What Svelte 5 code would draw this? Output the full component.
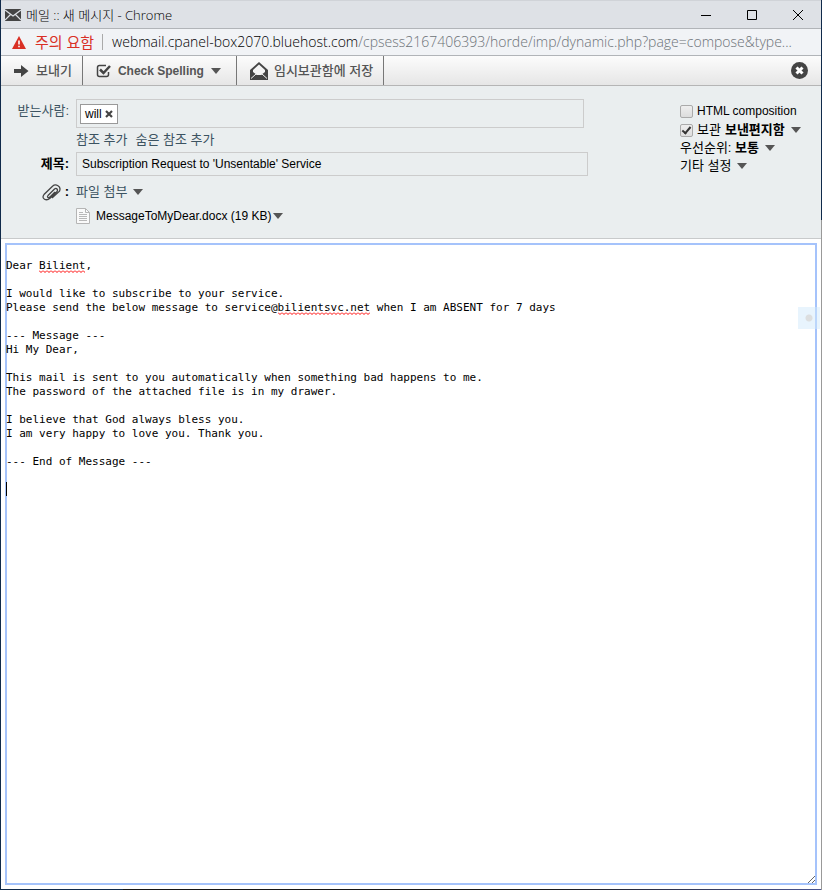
<script>
    let recipients = $state(["will"]);
    let subject = $state("Subscription Request to 'Unsentable' Service");
    let html = $state(false);
    let saveSent = $state(true);
    let body = $state(`
Dear Bilient,

I would like to subscribe to your service.
Please send the below message to service@bilientsvc.net when I am ABSENT for 7 days

--- Message ---
Hi My Dear,

This mail is sent to you automatically when something bad happens to me.
The password of the attached file is in my drawer.

I believe that God always bless you.
I am very happy to love you. Thank you.

--- End of Message ---

`);

    // words missing from the dictionary
    const unknown = /Bilient|bilientsvc\.net/g;
    let lines = $derived(body.split("\n"));
    let marks = $derived(
        lines.flatMap((line, row) =>
            [...line.matchAll(unknown)].map((m) => ({
                row,
                column: m.index,
                length: m[0].length,
            })),
        ),
    );

    function removeRecipient(name) {
        recipients = recipients.filter((r) => r !== name);
    }
</script>

{#snippet caret()}
    <svg class="caret" width="10" height="6" viewBox="0 0 10 6">
        <path d="M0 0h10L5 6z" fill="#555" />
    </svg>
{/snippet}

<div class="window">
    <header class="titlebar">
        <svg width="16" height="12" viewBox="0 0 16 12">
            <path d="M0 0h16v12H0z" fill="#444" />
            <path
                d="M0 1l8 6 8-6M0 11l5.500-5.500M16 11l-5.500-5.500"
                fill="none"
                stroke="#dee1e6"
                stroke-width="1.200"
            />
        </svg>
        <span class="title">메일 :: 새 메시지 - Chrome</span>
        <div class="controls">
            <button aria-label="최소화">
                <svg width="10" height="10"><path d="M0 5.500h10" /></svg>
            </button>
            <button aria-label="최대화">
                <svg width="10" height="10"><path d="M.5 .5h9v9h-9z" /></svg>
            </button>
            <button aria-label="닫기">
                <svg width="10" height="10"><path d="M0 0l10 10M10 0L0 10" /></svg>
            </button>
        </div>
    </header>

    <div class="address">
        <svg width="14" height="13" viewBox="0 0 14 13">
            <path d="M7 0l7 13H0z" fill="#d93025" />
            <path d="M6.200 4.500h1.600v4H6.200zM6.200 9.700h1.600v1.600H6.200z" fill="#fff" />
        </svg>
        <span class="warning">주의 요함</span>
        <span class="divider"></span>
        <span class="url"
            >webmail.cpanel-box2070.bluehost.com<span class="path"
                >/cpsess2167406393/horde/imp/dynamic.php?page=compose&type...</span
            ></span
        >
    </div>

    <nav class="toolbar">
        <button class="tool">
            <svg width="15" height="12" viewBox="0 0 15 12">
                <path d="M0 4h7V0l7.500 6L7 12V8H0z" fill="#444" />
            </svg>
            보내기
        </button>
        <button class="tool spelling">
            <svg width="15" height="14" viewBox="0 0 15 14" fill="none" stroke="#444">
                <path
                    d="M10 1.500H3.500q-2 0-2 2v7q0 2 2 2h7q2 0 2-2V8"
                    stroke-width="1.500"
                />
                <path d="M4 5.500l3.500 3.500L14 2" stroke-width="2.500" />
            </svg>
            Check Spelling
            {@render caret()}
        </button>
        <button class="tool draft">
            <svg width="18" height="18" viewBox="0 0 18 18">
                <path d="M0 8l9-8 9 8v10H0z" fill="#444" />
                <path d="M3 8l6-5.500L15 8v2l-4 3H7l-4-3z" fill="#f4f4f4" />
                <path d="M1 16.500l5-4.500h6l5 4.500" fill="none" stroke="#f4f4f4" />
            </svg>
            임시보관함에 저장
        </button>
        <button class="close" aria-label="취소">
            <svg width="17" height="17" viewBox="0 0 17 17">
                <circle cx="8.500" cy="8.500" r="8.500" fill="#444" />
                <path d="M5.500 5.500l6 6M11.500 5.500l-6 6" stroke="#fff" stroke-width="3" />
            </svg>
        </button>
    </nav>

    <section class="compose">
        <div class="fields">
            <label class="name" for="to">받는사람:</label>
            <div class="recipients">
                {#each recipients as name}
                    <span class="chip">
                        {name}
                        <button aria-label="{name} 삭제" onclick={() => removeRecipient(name)}>
                            <svg width="8" height="8" viewBox="0 0 8 8">
                                <path d="M1 1l6 6M7 1L1 7" stroke="#444" stroke-width="2.200" />
                            </svg>
                        </button>
                    </span>
                {/each}
                <input id="to" type="text" />
            </div>

            <div class="cc">
                <a href="#cc">참조 추가</a>
                <a href="#bcc">숨은 참조 추가</a>
            </div>

            <label class="name strong" for="subject">제목:</label>
            <input id="subject" class="subject" type="text" bind:value={subject} />

            <div class="name strong clip">
                <svg width="19" height="17" viewBox="0 0 19 17" fill="none" stroke="#444">
                    <path
                        d="M6 11.500l6.500-6.500q1.500-1.200 2.500 0t0 2.500L8 14.200q-2.800 2.500-5.500 1T2 10.500L10.500 2.200q2.500-2.200 5.500-.5t1.500 5.500L10 14M6 11.500q-1 1.500 0 2t2-.5l5-5"
                        stroke-width="1.300"
                    />
                </svg>
                :
            </div>
            <button class="menu attach">파일 첨부{@render caret()}</button>

            <div class="file">
                <svg width="14" height="16" viewBox="0 0 14 16">
                    <path d="M.5 .5h9l4 4v11H.5z" fill="#fafafa" stroke="#b5b5b5" />
                    <path d="M9.500 .5v4h4" fill="none" stroke="#b5b5b5" />
                    <path
                        d="M3 4.500h4M3 6.500h8M3 8.500h8M3 10.500h8M3 12.500h8"
                        stroke="#b8b8b8"
                    />
                </svg>
                <button class="menu">MessageToMyDear.docx (19 KB){@render caret()}</button>
            </div>
        </div>

        <div class="options">
            <label class="html"><input type="checkbox" bind:checked={html} />HTML composition</label>
            <div class="option">
                <label><input type="checkbox" bind:checked={saveSent} />보관</label>
                <button class="menu"><b>보낸편지함</b>{@render caret()}</button>
            </div>
            <button class="menu">우선순위: <b>보통</b>{@render caret()}</button>
            <button class="menu">기타 설정{@render caret()}</button>
        </div>
    </section>

    <main class="editor">
        <textarea aria-label="본문" spellcheck="false" bind:value={body}></textarea>
        {#each marks as mark}
            <svg
                class="mark"
                style="left: {mark.column}ch; top: {mark.row * 14 + 11}px; width: {mark.length}ch"
            >
                <defs>
                    <pattern id="squiggle" width="4" height="3" patternUnits="userSpaceOnUse">
                        <path d="M0 .5l2 2 2-2" fill="none" stroke="#f00" />
                    </pattern>
                </defs>
                <rect width="100%" height="3" fill="url(#squiggle)" />
            </svg>
        {/each}
        <i class="cursor" style="top: {(lines.length - 1) * 14}px"></i>
        <div class="handle"></div>
    </main>
</div>

<style>
    :global(body) {
        margin: 0;
    }

    .window {
        display: flex;
        flex-direction: column;
        box-sizing: border-box;
        min-height: 100vh;
        padding: 0 1px 1px;
        background:
            linear-gradient(#102a4a, #102a4a) left / 1px 100% no-repeat,
            linear-gradient(#102a4a 220px, #999 220px) right / 1px 100% no-repeat,
            linear-gradient(90deg, #102a4a 15%, #151515 15%, #151515 65%, #4a5590) bottom / 100% 1px no-repeat,
            #fff;
        color: #000;
        font: 13px/18px "Liberation Sans", "Noto Sans CJK KR", sans-serif;
    }

    button {
        display: flex;
        align-items: center;
        padding: 0;
        border: none;
        background: none;
        color: inherit;
        font: inherit;
        white-space: nowrap;
        cursor: pointer;
    }

    svg {
        flex: none;
    }

    .titlebar {
        display: flex;
        align-items: center;
        gap: 5px;
        box-sizing: border-box;
        height: 29px;
        padding-left: 4px;
        border-top: 1px solid #d0d3d8;
        border-bottom: 1px solid #b1b4b8;
        background: #dee1e6;
    }

    .title {
        font-family: "Open Sans", "Noto Sans CJK KR", sans-serif;
        font-weight: 300;
    }

    .controls {
        display: flex;
        margin-left: auto;
    }

    .controls button {
        justify-content: center;
        width: 46px;
        height: 27px;
    }

    .controls svg {
        fill: none;
        stroke: #000;
    }

    .address {
        display: flex;
        align-items: center;
        box-sizing: border-box;
        height: 27px;
        padding-left: 11px;
        border-bottom: 1px solid #b1b4b8;
        background: #f1f3f6;
        font: 14px/24px "Open Sans", "Noto Sans CJK KR", sans-serif;
        font-weight: 300;
        white-space: nowrap;
    }

    .warning {
        margin-left: 9px;
        color: #d93025;
        font-size: 15px;
        font-weight: 400;
    }

    .divider {
        flex: none;
        width: 1px;
        height: 16px;
        margin: 0 9px 0 8px;
        background: #aaa;
    }

    .path {
        color: #6c7277;
    }

    .toolbar {
        display: flex;
        box-sizing: border-box;
        height: 30px;
        border-bottom: 1px solid #b5b5b5;
        background: linear-gradient(#fcfcfc, #e6e6e6);
        color: #555;
    }

    .tool {
        gap: 7px;
        padding: 0 10px 0 13px;
        border-right: 1px solid #777;
        font-weight: 500;
    }

    .spelling {
        padding-right: 15px;
        font-size: 12px;
        font-weight: bold;
    }

    .draft {
        gap: 6px;
    }

    .close {
        margin-left: auto;
        padding-right: 13px;
    }

    .compose {
        display: flex;
        justify-content: space-between;
        gap: 92px;
        box-sizing: border-box;
        padding: 13px 20px 14px 12px;
        border-bottom: 1px solid #c8cacb;
        background: #eaeeef;
    }

    .fields {
        display: grid;
        flex: 1;
        grid-template-columns: 56px 1fr;
        grid-template-rows: 29px 24px 24px 32px 16px;
        align-items: center;
        column-gap: 7px;
    }

    .name {
        align-self: start;
        color: #3c5361;
        line-height: 24px;
        text-align: right;
        white-space: nowrap;
    }

    .strong {
        color: #000;
        font-weight: bold;
    }

    .recipients {
        display: flex;
        align-items: center;
        box-sizing: border-box;
        height: 29px;
        margin-right: 4px;
        padding: 0 3px;
        border: 1px solid #ccc;
    }

    .recipients input {
        flex: 1;
        min-width: 0;
        border: none;
        outline: none;
        background: transparent;
    }

    .chip {
        display: flex;
        align-items: center;
        gap: 3px;
        padding: 0 4px;
        border: 1px solid #999;
        background: #fff;
        font-size: 12px;
    }

    .cc,
    .file {
        grid-column: 2;
        display: flex;
        align-items: center;
    }

    .cc {
        gap: 8px;
    }

    .cc a {
        color: #3c5361;
        text-decoration: none;
    }

    .subject {
        box-sizing: border-box;
        width: 100%;
        height: 24px;
        padding: 0 5px;
        border: 1px solid #ccc;
        background: transparent;
        color: #000;
        font: inherit;
        font-size: 12px;
    }

    .clip {
        display: flex;
        align-items: center;
        align-self: center;
        justify-content: flex-end;
        gap: 4px;
    }

    .menu .caret {
        margin-left: 6px;
    }

    .attach {
        color: #3c5361;
    }

    .file {
        gap: 6px;
        font-size: 12px;
    }

    .file .menu .caret {
        margin-left: 2px;
    }

    .options {
        display: flex;
        flex-direction: column;
        align-items: flex-start;
        width: 121px;
        padding-top: 2px;
    }

    .options label,
    .option {
        display: flex;
        align-items: center;
        gap: 4px;
        white-space: nowrap;
    }

    .options .html {
        font-size: 12px;
        line-height: 20px;
    }

    .options .menu {
        white-space: pre;
    }

    .options input {
        appearance: none;
        box-sizing: border-box;
        width: 13px;
        height: 13px;
        margin: 0;
        border: 1px solid #aaa;
        border-radius: 2px;
        background: linear-gradient(#eee, #ddd);
    }

    .options input:checked::before {
        content: "";
        display: block;
        box-sizing: border-box;
        width: 5px;
        height: 9px;
        margin-left: 3px;
        border: solid #333;
        border-width: 0 2px 2px 0;
        transform: rotate(40deg);
    }

    .editor {
        position: relative;
        display: grid;
        flex: 1;
        margin: 4px;
        padding-top: 1px;
        border: 1px solid #a5c3fb;
        background: #fff;
        box-shadow: inset 0 0 0 1px #a5c3fb;
        font: 11px/14px "DejaVu Sans Mono", monospace;
    }

    textarea {
        box-sizing: border-box;
        width: 100%;
        margin: 0;
        padding: 0;
        border: none;
        outline: none;
        background: transparent;
        color: #000;
        font: inherit;
        resize: vertical;
    }

    .mark {
        position: absolute;
        height: 3px;
        margin-top: 1px;
    }

    .cursor {
        position: absolute;
        left: 0;
        width: 1px;
        height: 14px;
        background: #000;
    }

    .handle {
        position: absolute;
        top: 63px;
        right: -4px;
        width: 22px;
        height: 22px;
        background:
            radial-gradient(circle, #dcdedf 3px, transparent 4px),
            rgba(210, 234, 252, 0.5);
    }
</style>
